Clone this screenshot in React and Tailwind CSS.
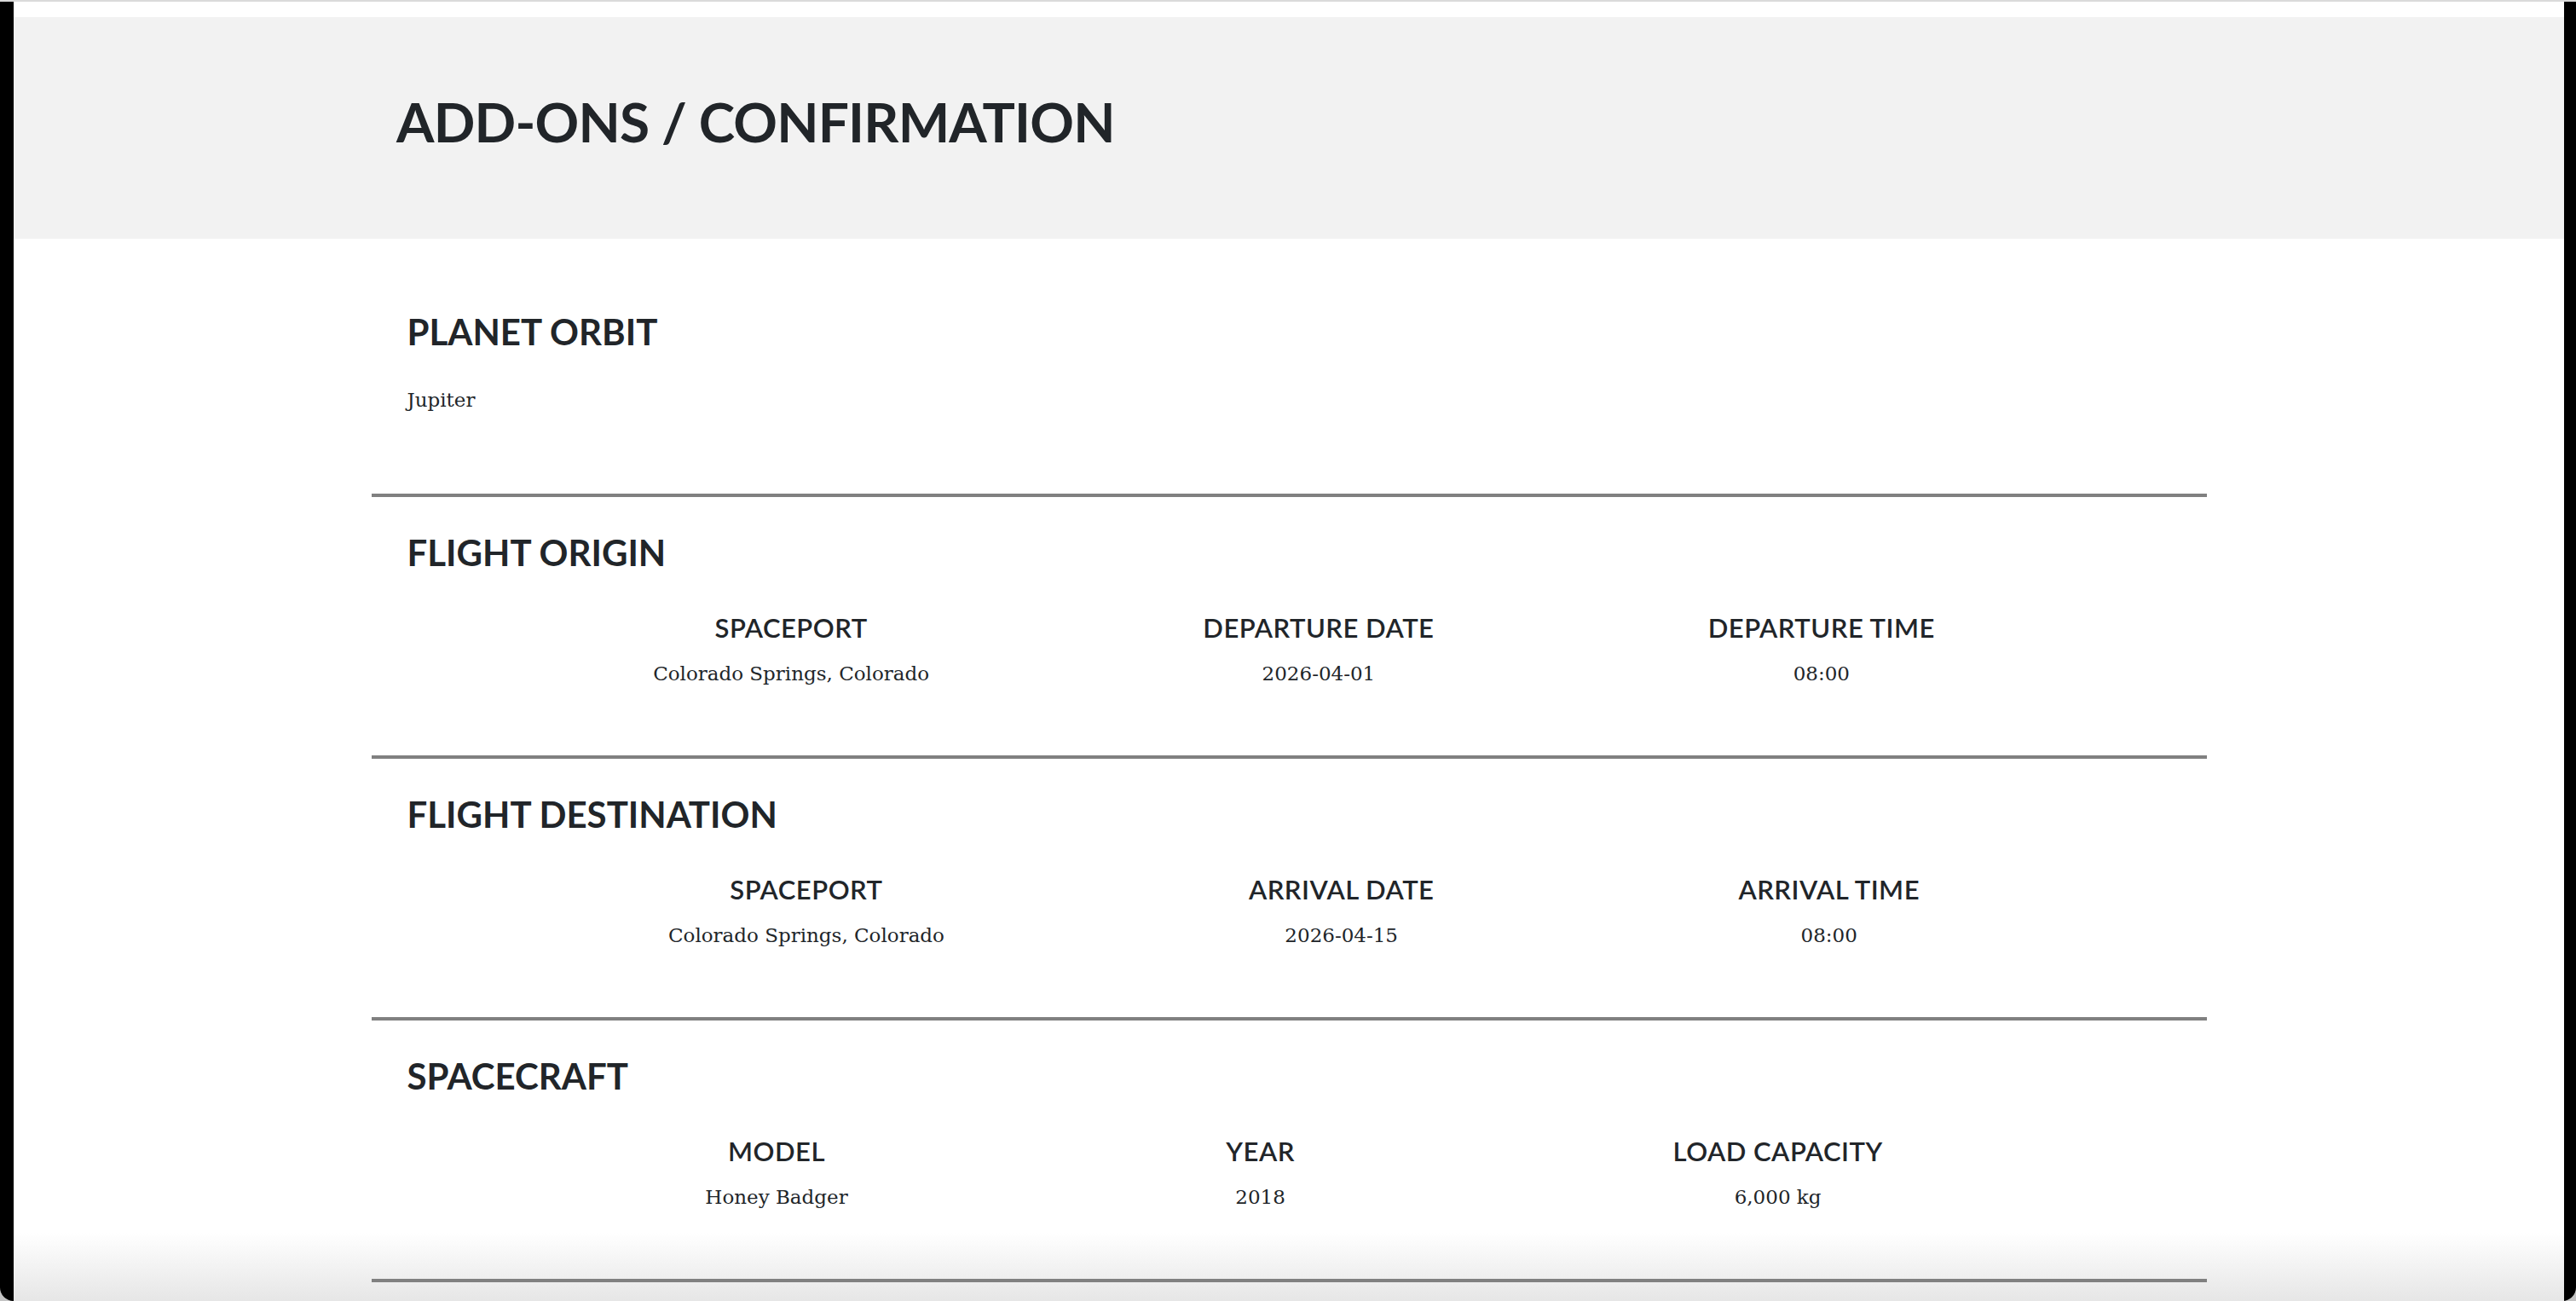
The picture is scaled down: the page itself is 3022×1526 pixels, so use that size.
const sections = [
  {
    title: 'PLANET ORBIT',
    value: 'Jupiter',
  },
  {
    title: 'FLIGHT ORIGIN',
    cols: [
      ['SPACEPORT', 'Colorado Springs, Colorado'],
      ['DEPARTURE DATE', '2026-04-01'],
      ['DEPARTURE TIME', '08:00'],
    ],
  },
  {
    title: 'FLIGHT DESTINATION',
    cols: [
      ['SPACEPORT', 'Colorado Springs, Colorado'],
      ['ARRIVAL DATE', '2026-04-15'],
      ['ARRIVAL TIME', '08:00'],
    ],
  },
  {
    title: 'SPACECRAFT',
    cols: [
      ['MODEL', 'Honey Badger'],
      ['YEAR', '2018'],
      ['LOAD CAPACITY', '6,000 kg'],
    ],
  },
];

function Detail({ label, value }) {
  return (
    <div className="flex flex-col items-center text-center">
      <h6 className="font-['Lato',sans-serif] font-semibold text-[31px] leading-none tracking-[0.5px] text-[#212529]">
        {label}
      </h6>
      <p className="mt-[27px] font-['DejaVu_Serif',serif] text-[23px] leading-none text-[#212529]">
        {value}
      </p>
    </div>
  );
}

function Section({ section, first }) {
  return (
    <section className={first ? 'pt-[88px]' : 'border-t-4 border-[#808080] pt-[44px]'}>
      <h5 className="px-[42px] font-['Lato',sans-serif] font-bold text-[42px] leading-none text-[#212529]">
        {section.title}
      </h5>
      {section.value ? (
        <p className="mt-[48px] mb-[98px] px-[42px] font-['DejaVu_Serif',serif] text-[23px] leading-none text-[#212529]">
          {section.value}
        </p>
      ) : (
        <div className="mt-[52px] mb-[84px] ml-[170px] mr-[158px] flex justify-around">
          {section.cols.map(([label, value]) => (
            <Detail key={label} label={label} value={value} />
          ))}
        </div>
      )}
    </section>
  );
}

export default function App() {
  return (
    <div className="h-[1526px] w-full overflow-hidden bg-[#c4c4c4]">
      <div className="h-[2px] bg-[#dadada]" />
      <div className="h-[1524px] rounded-b-[16px] bg-black pl-[16px] pr-[14px]">
        <main className="relative h-full overflow-hidden bg-white">
          <div className="pointer-events-none absolute inset-x-0 bottom-0 h-[80px] bg-linear-to-b from-white to-[#e6e6e6]" />
          <div className="relative">
            <header className="mt-[18px] h-[260px] bg-[#f2f2f2] pt-[91px] pl-[449px]">
              <h1 className="font-['Lato',sans-serif] font-bold text-[64px] leading-none tracking-[-0.8px] text-[#212529]">
                ADD-ONS / CONFIRMATION
              </h1>
            </header>
            <div className="mx-auto w-[2153px]">
              {sections.map((s, i) => (
                <Section key={s.title} section={s} first={i === 0} />
              ))}
              <div className="border-t-4 border-[#808080]" />
            </div>
          </div>
        </main>
      </div>
    </div>
  );
}
